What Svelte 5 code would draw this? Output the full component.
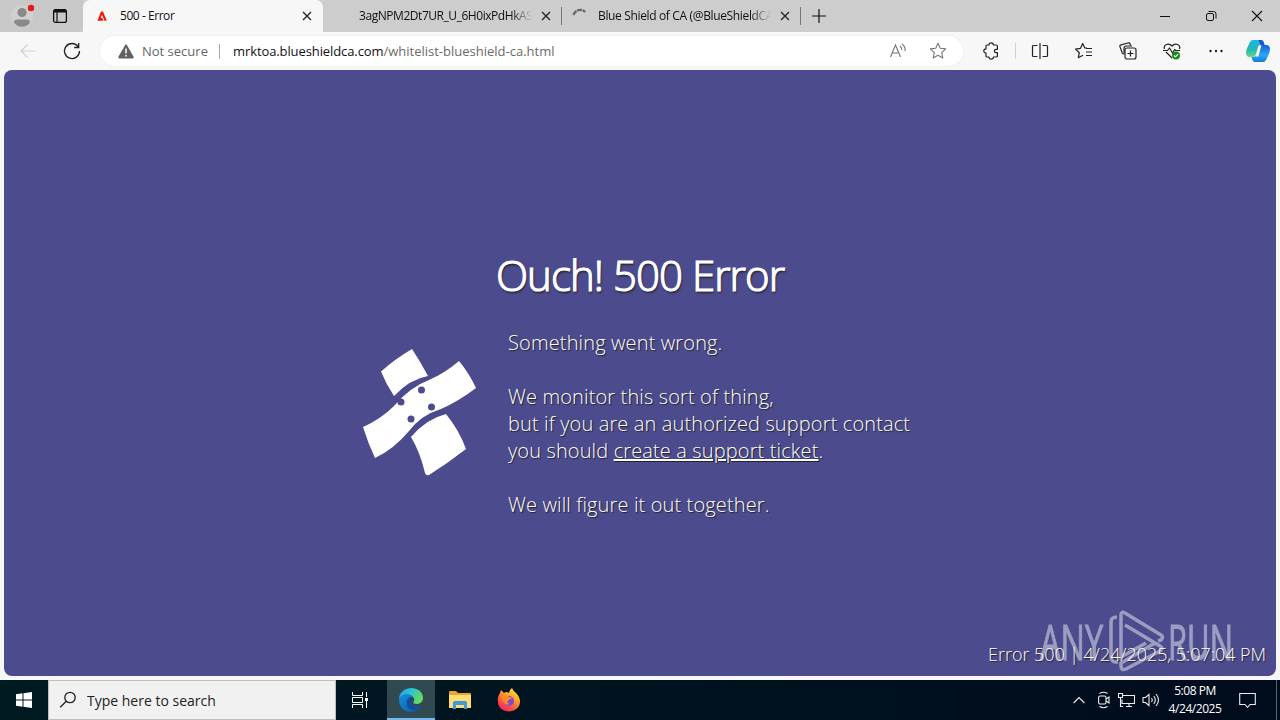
<script lang="ts">
  const searchHint = "Type here to search";
  const tabs = [
    { title: "500 - Error", kind: "active" },
    { title: "3agNPM2Dt7UR_U_6H0ixPdHkAS", kind: "blank" },
    { title: "Blue Shield of CA (@BlueShieldCA", kind: "loading" },
  ];
</script>

<div class="desktop">
  <header class="tabbar">
    <div class="tab-tools">
      <svg class="profile" width="28" height="32" viewBox="0 0 28 32">
        <circle cx="14" cy="16" r="11" fill="#d2d0ce" />
        <circle cx="14" cy="12.5" r="4.6" fill="#8b8988" />
        <path d="M6 22.5q0-3 3-3h10q3 0 3 3-3 4.200-8 4.200t-8-4.200z" fill="#8b8988" />
        <circle cx="23" cy="8" r="3.200" fill="#e3171b" />
      </svg>
      <svg class="workspaces" width="16" height="16" viewBox="0 0 16 16" fill="none" stroke="#111">
        <rect x="1.600" y="1.600" width="12.800" height="12.800" rx="2" stroke-width="1.300" />
        <path d="M2 3h12" stroke-width="3" />
        <path d="M5 4v10" stroke-width="1.200" />
      </svg>
    </div>
    {#each tabs as tab}
      <div class="tab {tab.kind}">
        <span class="favicon">
          {#if tab.kind === "active"}
            <svg width="12" height="12" viewBox="0 0 12 12"><path d="M1.400 10.700 5 1.400h2l3.800 9.300H8.500L6 4.700 4.700 8h1.700l1 2.700z" fill="#f5170b" /></svg>
          {:else if tab.kind === "loading"}
            <svg width="16" height="16" viewBox="0 0 16 16"><path d="M1.500 7A7 7 0 0 1 13.200 4" fill="none" stroke="#686868" stroke-width="2.300" stroke-dasharray="5 .7" /></svg>
          {/if}
        </span>
        <span class="tab-title">{tab.title}</span>
        <svg class="close" width="10" height="10" viewBox="0 0 10 10"><path d="M1 1l8 8M9 1 1 9" stroke="#222" stroke-width="1.300" /></svg>
      </div>
    {/each}
    <svg class="new-tab" width="14" height="14" viewBox="0 0 14 14"><path d="M7 0v14M0 7h14" stroke="#111" stroke-width="1.200" /></svg>
    <div class="window-controls">
      <svg width="46" height="32" viewBox="0 0 46 32"><path d="M18 16.500h10" stroke="#111" /></svg>
      <svg width="46" height="32" viewBox="0 0 46 32" fill="none" stroke="#111"><rect x="18.500" y="13.500" width="7" height="7" rx="1.500" /><path d="M20.500 11.500h5q2.500 0 2.500 2.500v4.500" /></svg>
      <svg width="46" height="32" viewBox="0 0 46 32"><path d="M18 11l10 10M28 11 18 21" stroke="#111" stroke-width="1.100" /></svg>
    </div>
  </header>

  <nav class="toolbar">
    <svg class="back" width="16" height="16" viewBox="0 0 16 16" fill="none" stroke="#cfcfcf" stroke-width="1.100"><path d="M15.500 8H1M7.500 1.500 1 8l6.500 6.500" /></svg>
    <svg class="reload" width="18" height="18" viewBox="0 0 18 18" fill="none" stroke="#222" stroke-width="1.300"><path d="M15.200 4.800A7.500 7.500 0 1 0 16.500 9M15.700 1v4.500h-4.500" /></svg>
    <div class="address">
      <svg class="warning" width="16" height="15" viewBox="0 0 16 15"><path d="M7 1.200q1-1.700 2 0l6.600 11.600Q16 14.500 14.300 14.500H1.700Q0 14.500.4 12.800z" fill="#616161" /><path d="M8 4.500v5M8 11v1.600" stroke="#fff" stroke-width="1.500" /></svg>
      <span class="insecure">Not secure</span>
      <span class="separator"></span>
      <span class="host">mrktoa.blueshieldca.com</span><span class="path">/whitelist-blueshield-ca.html</span>
      <svg class="read-aloud" width="18" height="16" viewBox="0 0 18 16" fill="none" stroke="#777" stroke-width="1.100"><path d="M1.500 14 6.500 2l5 12M3.500 10h6.200M11 3q2 1.500 1.700 4M13 1q3.700 2.500 3 7" /></svg>
      <svg class="star" width="18" height="18" viewBox="0 0 18 18" fill="none" stroke="#777" stroke-width="1.100" stroke-linejoin="round"><path d="m9 1.300 2.300 5 5.400.6-4 3.700 1.100 5.400L9 13.300 4.200 16l1.100-5.400-4-3.700 5.400-.6z" /></svg>
    </div>
    <svg class="puzzle" width="18" height="18" viewBox="0 0 18 18" fill="none" stroke="#222" stroke-width="1.200" stroke-linejoin="round"><path d="M5 3h2a2.200 2.200 0 0 1 4.400 0h3q1 0 1 1v3.300h-1.300a1.700 1.700 0 0 0 0 3.400h1.300V14q0 1-1 1h-3A2.200 2.200 0 0 1 7 15H5q-1 0-1-1v-2.800a2.200 2.200 0 0 1 0-4.400V4q0-1 1-1z" /></svg>
    <span class="toolbar-divider"></span>
    <div class="actions">
      <svg width="18" height="18" viewBox="0 0 18 18" fill="none" stroke="#222" stroke-width="1.200"><path d="M6.500 3.500h-4q-1 0-1 1v9q0 1 1 1h4M11.500 3.500h4q1 0 1 1v9q0 1-1 1h-4M9 1v16" /></svg>
      <svg width="18" height="18" viewBox="0 0 18 18" fill="none" stroke="#222" stroke-width="1.200" stroke-linejoin="round"><path d="M12 6H9.800L7.700 1.500 5.500 6.300l-5 .8 3.800 3.600-1 5 4.700-2.400M11 6.500h6M11 10h6M11 13.500h6" /></svg>
      <svg width="18" height="18" viewBox="0 0 18 18" fill="none" stroke="#222" stroke-width="1.200" stroke-linejoin="round"><path d="M4.500 12.500 3.300 11 1 4.900q-.6-1.500 1-2.100L9 1q1.600-.4 2.100 1l.5 1.500" /><rect x="6" y="6" width="11" height="11" rx="2" /><path d="M5 12V6.500Q5 4 7.500 4H13M11.500 8.500v6M8.500 11.500h6" /></svg>
      <svg width="18" height="18" viewBox="0 0 18 18" fill="none" stroke="#222" stroke-width="1.200" stroke-linejoin="round"><path d="M1.500 7C0 3 5.500 0 9 4c3.500-4 9-1 7.500 3M3 10l6 6M0 8.500h4.500L6.500 6l3 5 2.200-3.500 1 1H17" /><circle cx="13" cy="13.500" r="4" fill="#138a18" stroke="none" /><path d="m11 13.500 1.400 1.400 2.700-2.800" stroke="#fff" /></svg>
      <svg width="18" height="18" viewBox="0 0 18 18" fill="#222"><circle cx="3.500" cy="9" r="1.200" /><circle cx="9" cy="9" r="1.200" /><circle cx="14.500" cy="9" r="1.200" /></svg>
    </div>
    <svg class="copilot" width="24" height="22" viewBox="0 0 24 22">
      <defs>
        <linearGradient id="cp-a" x2="0" y2="1"><stop stop-color="#20b4ed" /><stop offset=".55" stop-color="#24b8b5" /><stop offset="1" stop-color="#61d982" /></linearGradient>
        <linearGradient id="cp-b" x2="0" y2="1"><stop stop-color="#1c5be0" /><stop offset=".6" stop-color="#28aaf4" /><stop offset="1" stop-color="#1478da" /></linearGradient>
      </defs>
      <path d="M7 0h8q2.500 0 3.500 5h-4q-1.700 0-2.400 2L10 14q-.8 3-3 3H4q-4 0-4-4 0-3 3-9Q4.500 0 7 0z" fill="url(#cp-a)" />
      <path d="M17 22H9q-2.500 0-3.500-5H8q2 0 3-3l2-6.500Q14 5 16 5h4q4 0 4 4 0 3-3 9-1.500 4-4 4z" fill="url(#cp-b)" />
      <path d="M12.500 0h2.700q2.300 0 3.300 5h-3Q14 5 12.500 0z" fill="#1957cc" />
      <path d="m12.800 6-3 10.500h2.500l3-10.500z" fill="#f7f7f7" />
    </svg>
  </nav>

  <main class="page">
    <h1>Ouch! 500 Error</h1>
    <section class="message">
      <svg class="bandage" width="114" height="128" viewBox="0 0 114 128">
        <path d="M18 23.500Q32 11 49 1q8 12 16 27-18 3-34 20-8-12-13-24.500z" fill="#fff" />
        <path d="M0 79Q18 71 31 58q16-19 35-26Q82 25 96 13q10 12 17 27-17 13-35 21-20 6-32 22-15 18-34 27Q5 95 0 79z" fill="#fff" />
        <path d="M48 89q15-18 35-23 13 16 20 35-18 14-37 26-3 1-4-2-5-21-14-36z" fill="#fff" />
        <g fill="#4c4b8e"><circle cx="58.500" cy="42" r="3.500" /><circle cx="38" cy="54" r="3.500" /><circle cx="68.500" cy="59" r="3.500" /><circle cx="48" cy="71" r="3.500" /></g>
      </svg>
      <div class="copy">
        <p>Something went wrong.</p>
        <p>We monitor this sort of thing,<br />but if you are an authorized support contact<br />you should <a href="#ticket">create a support ticket</a>.</p>
        <p>We will figure it out together.</p>
      </div>
    </section>
    <footer class="error-stamp">Error 500 | 4/24/2025, 5:07:04 PM</footer>
    <svg class="watermark" width="196" height="64" viewBox="0 0 196 64">
      <g class="brand">
        <text x="3" y="50.500" textLength="63" lengthAdjust="spacingAndGlyphs">ANY</text>
        <text x="131" y="50.500" textLength="65" lengthAdjust="spacingAndGlyphs">RUN</text>
      </g>
      <path d="M80 8q-6 0-6 5v34q0 7 7 6M84 44V6q0-4 4-2l36 22q3 2 0 5l-3 1M88 16l35 21q4 2 0 5L89 60q-5 2-5-3v-3l34-20M84 12v36l25-14" fill="none" stroke="#fff" stroke-width="3.500" />
    </svg>
  </main>

  <footer class="taskbar">
    <div class="start">
      <svg width="16" height="16" viewBox="0 0 16 16" fill="#fff"><path d="M0 2.200 6.500 1.300v6.200H0zM7.500 1.200 16 0v7.500H7.500zM0 8.500h6.500v6.200L0 13.800zM7.500 8.500H16V16l-8.500-1.200z" /></svg>
    </div>
    <div class="search">
      <svg width="18" height="18" viewBox="0 0 18 18" fill="none" stroke="#222" stroke-width="1.300"><circle cx="11" cy="6.500" r="5.200" /><path d="m7.200 10.300-6 6" /></svg>
      <span>{searchHint}</span>
    </div>
    <div class="app">
      <svg class="task-view" width="18" height="18" viewBox="0 0 18 18" fill="none" stroke="#fff"><path d="M1.500 1v3.500h10V1M1.500 17v-3.500h10V17M15.500 1v5M15.500 10v7" /><path d="M1.500 6.500h10v5h-10z" /><path d="M14 7h3v3h-3z" fill="#fff" stroke="none" /></svg>
    </div>
    <div class="app running">
      <svg width="24" height="24" viewBox="0 0 24 24">
        <defs>
          <linearGradient id="edge-a" x2="1" y2=".4"><stop stop-color="#229ee4" /><stop offset=".5" stop-color="#2ac3d6" /><stop offset="1" stop-color="#62dc5c" /></linearGradient>
          <linearGradient id="edge-b" x2="1" y2="1"><stop stop-color="#168ee0" /><stop offset="1" stop-color="#0c59a4" /></linearGradient>
        </defs>
        <path d="M0 11C1-4 24-3 24 10c0 5-5 7-9 5.500-2-1 1-2 0-5C13 5 3 5 0 11z" fill="url(#edge-a)" />
        <path d="M0 11c2-6 12-6 14-1-5-2-6 7 0 9 4 1.500 7-.5 8-1-5 8-22 9-22-7z" fill="url(#edge-b)" />
        <path d="M7.500 15c0-4 2.500-6.500 6-6-3 2-2 7 2 8.500 3 1 5 .5 6.500 0-4 7-14.500 5.500-14.500-2.500z" fill="#124f98" />
      </svg>
    </div>
    <div class="app">
      <svg width="22" height="20" viewBox="0 0 22 20"><path d="M0 2q0-1 1-1h6l2 2h12q1 0 1 1v13H0z" fill="#e9a52f" /><path d="M0 5h22v13H0z" fill="#ffdc73" /><path d="M4 19v-6q0-2 2-2h10q2 0 2 2v6h-3v-4H7v4z" fill="#3b9bdc" /></svg>
    </div>
    <div class="app">
      <svg width="24" height="24" viewBox="0 0 24 24">
        <defs><linearGradient id="fox" x1=".8" x2=".2" y2="1"><stop stop-color="#fff04a" /><stop offset=".4" stop-color="#ff9b25" /><stop offset=".75" stop-color="#ff4547" /><stop offset="1" stop-color="#e61e72" /></linearGradient></defs>
        <path d="M3 5 4 2l3 3q3-2 5 0 0-3 3-5 1 3 4 5 4 4 4 9c-1 13-22 12-22 0q-1-5 2-9z" fill="url(#fox)" />
        <circle cx="12" cy="13" r="5" fill="#8148d5" />
        <path d="M4 8q5-3 8 1l4 1q-4 1-5 3-2 2 2 3-5 2-7-3z" fill="#ff8b24" />
      </svg>
    </div>
    <div class="tray">
      <svg class="chevron" width="12" height="8" viewBox="0 0 12 8"><path d="m.6 7 5.400-5.400L11.400 7" /></svg>
      <svg class="meet" width="12" height="18" viewBox="0 0 12 18"><rect x=".6" y="5" width="7.400" height="8" rx="1.500" /><path d="m8 8 3-2v6l-3-2M1.500 2.500Q5.500 0 9.500 2.500M1.500 15.500q4 2.500 8 0" /></svg>
      <svg class="network" width="17" height="16" viewBox="0 0 17 16"><path d="M5 3.500h11.500v8H4v-4M8 14.500h6M11 12v2.500M.5 1.500h4v4h-4zM2.500 5.500v9H5" /></svg>
      <svg class="volume" width="18" height="16" viewBox="0 0 18 16"><path d="M1 5.500h2.500L7 2.500v11l-3.500-3H1zM9.500 6q1.500 2 0 4M11.800 4q3 4 0 8M14 2q5 6 0 12" /></svg>
      <div class="clock"><span>5:08 PM</span><span>4/24/2025</span></div>
      <svg class="notice" width="17" height="17" viewBox="0 0 17 17"><path d="M.7 1.500h15.600v11H11l-2.500 3-2.500-3H.7z" /></svg>
      <span class="peek"></span>
    </div>
  </footer>
</div>

<style>
  :global(body) {
    margin: 0;
    overflow: hidden;
  }

  .desktop {
    width: 1280px;
    height: 720px;
    display: flex;
    flex-direction: column;
    background: #f7f7f7;
    font-family: "Open Sans", sans-serif;
    font-size: 12px;
    color: #111;
  }

  svg {
    display: block;
    flex: none;
  }

  .tabbar {
    height: 32px;
    display: flex;
    align-items: center;
    background: #cdcdcd;
  }

  .tab-tools {
    width: 83px;
    height: 32px;
    box-sizing: border-box;
    display: flex;
    align-items: center;
    gap: 16px;
    padding-left: 8px;
    background: #c8c8c8;
    border-bottom-right-radius: 6px;
  }

  .tab {
    box-sizing: border-box;
    width: 239px;
    height: 32px;
    display: flex;
    align-items: center;
    padding: 0 11px 0 13px;
    position: relative;
  }

  .tab.active {
    width: 240px;
    background: #f7f7f7;
    border-radius: 7px 7px 0 0;
  }

  .tab.blank::after,
  .tab.loading::after {
    content: "";
    position: absolute;
    right: 0;
    top: 7px;
    height: 18px;
    border-right: 1px solid #777;
  }

  .favicon {
    width: 24px;
    flex: none;
  }

  .blank .favicon {
    width: 23px;
  }

  .loading .favicon {
    margin-left: -3px;
    width: 26px;
  }

  .tab-title {
    flex: 1;
    overflow: hidden;
    white-space: nowrap;
    font-size: 12px;
    line-height: 18px;
    letter-spacing: -0.45px;
  }

  .loading .tab-title {
    letter-spacing: -0.35px;
  }

  .blank .tab-title,
  .loading .tab-title {
    margin-right: 9px;
    mask-image: linear-gradient(90deg, #000 88%, transparent);
  }

  .new-tab {
    margin-left: 11px;
  }

  .window-controls {
    display: flex;
    margin-left: auto;
  }

  .toolbar {
    height: 38px;
    display: flex;
    align-items: center;
    box-sizing: border-box;
  }

  .back {
    margin-left: 20px;
  }

  .reload {
    margin-left: 27px;
  }

  .address {
    width: 863px;
    height: 30px;
    box-sizing: border-box;
    margin-left: 19px;
    padding: 0 16px 0 18px;
    border-radius: 15px;
    background: #fff;
    display: flex;
    align-items: center;
    font-size: 13px;
    box-shadow: 0 0 2px #e5e5e5;
  }

  .insecure {
    margin-left: 8px;
    width: 77px;
    color: #666;
    white-space: nowrap;
  }

  .separator {
    width: 1px;
    height: 15px;
    margin-right: 13px;
    background: #aaa;
  }

  .host {
    letter-spacing: -0.1px;
  }

  .path {
    color: #6b6b6b;
  }

  .read-aloud {
    margin-left: auto;
  }

  .star {
    margin-left: 22px;
  }

  .puzzle {
    margin-left: 19px;
  }

  .toolbar-divider {
    width: 1px;
    height: 16px;
    margin-left: 15px;
    background: #d0d0d0;
  }

  .actions {
    display: flex;
    gap: 26px;
    margin-left: 15px;
  }

  .copilot {
    margin-left: 21px;
  }

  .page {
    height: 606px;
    box-sizing: border-box;
    margin: 0 4px 4px;
    padding-top: 176px;
    position: relative;
    display: flex;
    flex-direction: column;
    align-items: center;
    border-radius: 8px;
    background: #4c4b8e;
    color: #fff;
    text-shadow: 1px 1px 1px #222;
  }

  h1 {
    margin: 0;
    font-size: 42px;
    line-height: 57px;
    font-weight: 300;
    letter-spacing: -0.95px;
    white-space: nowrap;
    -webkit-text-stroke: 1.2px #fff;
    text-shadow: 1px 2px 2px #222;
  }

  .message {
    width: 554px;
    display: flex;
    align-items: flex-start;
    gap: 31px;
    margin-top: 26px;
  }

  .bandage {
    margin-top: 19px;
  }

  .copy {
    font-size: 20px;
    line-height: 27px;
    font-weight: 300;
    letter-spacing: 0.13px;
    white-space: nowrap;
  }

  .copy p {
    margin: 0 0 27px;
  }

  .copy p:last-child {
    margin: 0;
  }

  .copy a {
    color: inherit;
  }

  .error-stamp {
    align-self: flex-end;
    margin: auto 10px 9px 0;
    font-size: 18px;
    line-height: 25px;
    font-weight: 300;
    letter-spacing: -0.05px;
    white-space: nowrap;
  }

  .watermark {
    position: absolute;
    right: 43px;
    bottom: 3px;
    overflow: visible;
    opacity: 0.45;
  }

  .brand {
    font-size: 50px;
    font-weight: 400;
    fill: #fff;
    stroke: #fff;
    stroke-width: 1;
    text-shadow: none;
  }

  .taskbar {
    height: 40px;
    display: flex;
    background: linear-gradient(90deg, #001a22, #000b1c);
    color: #fff;
  }

  .start,
  .app {
    width: 48px;
    display: grid;
    place-items: center;
  }

  .app {
    width: 49px;
  }

  .task-view {
    margin-right: 2px;
  }

  .app.running {
    width: 48px;
    box-sizing: border-box;
    margin-left: 2px;
    padding-top: 2px;
    background: #314a52;
    border-bottom: 2px solid #76b9ed;
  }

  .search {
    width: 288px;
    box-sizing: border-box;
    display: flex;
    align-items: center;
    gap: 10px;
    padding-left: 10px;
    background: #f1f1f1;
    border: 1px solid #c4bcbc;
    color: #222;
    font-size: 14px;
  }

  .tray {
    margin-left: auto;
    display: flex;
    align-items: center;
  }

  .tray svg {
    fill: none;
    stroke: #eee;
    stroke-width: 1.1;
  }

  .meet {
    margin-left: 13px;
  }

  .network {
    margin-left: 8px;
  }

  .volume {
    margin-left: 7px;
  }

  .clock {
    width: 70px;
    display: flex;
    flex-direction: column;
    align-items: center;
    font-size: 12px;
    line-height: 18px;
    letter-spacing: -0.45px;
  }

  .notice {
    margin: 0 20px 0 9px;
  }

  .peek {
    width: 4px;
    height: 40px;
    box-sizing: border-box;
    border-left: 1px solid #59616b;
  }
</style>
